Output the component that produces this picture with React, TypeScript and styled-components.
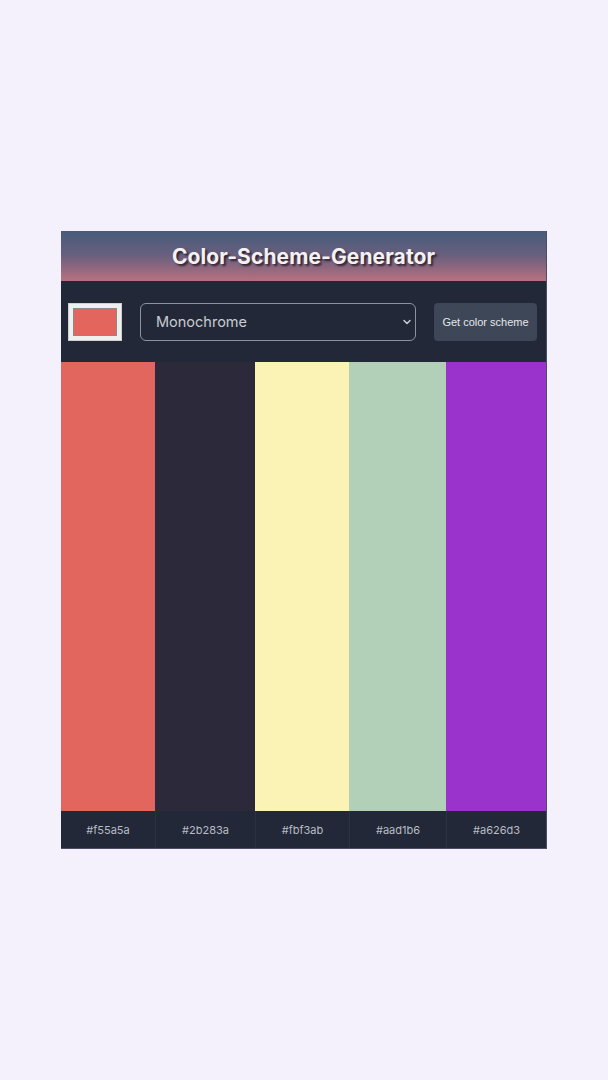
import React, { useState } from 'react';
import styled, { createGlobalStyle } from 'styled-components';

type Swatch = {
  hex: string;
  shown: string;
  width: number;
};

const swatches: Swatch[] = [
  { hex: '#f55a5a', shown: '#e3665e', width: 94 },
  { hex: '#2b283a', shown: '#2c2a3a', width: 100 },
  { hex: '#fbf3ab', shown: '#fbf3b5', width: 94 },
  { hex: '#aad1b6', shown: '#b2d0b8', width: 97 },
  { hex: '#a626d3', shown: '#9a32cc', width: 100 },
];

const GlobalStyle = createGlobalStyle`
  * { box-sizing: border-box; }
  html, body {
    margin: 0;
    padding: 0;
    background: #f4f1fc;
    font-family: Inter, "Noto Sans", sans-serif;
  }
`;

const App = () => {
  const [mode, setMode] = useState('monochrome');

  return (
    <>
      <GlobalStyle />
      <Page>
        <Card>
          <Header>
            <Title>Color-Scheme-Generator</Title>
          </Header>
          <Controls>
            <ColorPick>
              <ColorFill />
            </ColorPick>
            <SelectWrap>
              <Select value={mode} onChange={(e) => setMode(e.target.value)}>
                <option value="monochrome">Monochrome</option>
                <option value="monochrome-dark">Monochrome-dark</option>
                <option value="analogic">Analogic</option>
                <option value="complement">Complement</option>
              </Select>
              <Chevron width="10" height="10" viewBox="0 0 10 10">
                <path d="M2 3.5 L5 6.5 L8 3.5" fill="none" stroke="#c9ccd2" strokeWidth="1.5" strokeLinecap="round" strokeLinejoin="round" />
              </Chevron>
            </SelectWrap>
            <Button>Get color scheme</Button>
          </Controls>
          <Columns>
            {swatches.map((s, i) => (
              <Column key={s.hex} width={s.width}>
                <Block color={s.shown} />
                <Label divider={i > 0}>{s.hex}</Label>
              </Column>
            ))}
          </Columns>
        </Card>
      </Page>
    </>
  );
};

const Page = styled.div`
  min-height: 1080px;
  display: flex;
  justify-content: center;
  padding-top: 231px;
`;

const Card = styled.div`
  width: 486px;
  height: 618px;
  display: flex;
  flex-direction: column;
  background: #222838;
  border-right: 1px solid #4a4f63;
  border-bottom: 1px solid #4a4f63;
`;

const Header = styled.div`
  height: 50px;
  display: flex;
  align-items: center;
  justify-content: center;
  background: linear-gradient(to bottom, #465b7b 0%, #6a5f7e 50%, #b8717f 100%);
`;

const Title = styled.h1`
  margin: 0;
  font-size: 21px;
  font-weight: 700;
  color: #f4f1f1;
  text-shadow: 2px 2px 2px rgba(30, 20, 30, 0.8);
  letter-spacing: 0.1px;
`;

const Controls = styled.div`
  height: 81px;
  display: flex;
  align-items: center;
  padding: 0 9px 0 7px;
`;

const ColorPick = styled.div`
  width: 54px;
  height: 38px;
  background: #efefef;
  border: 1px solid #d0d0d0;
  padding: 4px 4px;
  flex-shrink: 0;
`;

const ColorFill = styled.div`
  width: 100%;
  height: 100%;
  background: #e3665e;
  border: 1px solid #8a8a8a;
`;

const SelectWrap = styled.div`
  position: relative;
  margin-left: 18px;
  width: 276px;
  height: 38px;
`;

const Select = styled.select`
  appearance: none;
  width: 100%;
  height: 100%;
  background: #222838;
  border: 1px solid #8e929c;
  border-radius: 6px;
  color: #c9ccd2;
  font-family: Inter, "Noto Sans", sans-serif;
  font-size: 14.5px;
  padding: 0 0 0 15px;
  outline: none;
`;

const Chevron = styled.svg`
  position: absolute;
  right: 4px;
  top: 14px;
  pointer-events: none;
`;

const Button = styled.button`
  margin-left: auto;
  width: 103px;
  height: 38px;
  border: none;
  border-radius: 4px;
  background: #3d4758;
  color: #e6e7ea;
  font-family: "Liberation Sans", Arial, sans-serif;
  font-size: 11px;
  padding: 0;
`;

const Columns = styled.div`
  flex: 1;
  display: flex;
`;

const Column = styled.div<{ width: number }>`
  width: ${(p) => p.width}px;
  display: flex;
  flex-direction: column;
`;

const Block = styled.div<{ color: string }>`
  flex: 1;
  background: ${(p) => p.color};
`;

const Label = styled.div<{ divider: boolean }>`
  height: 37px;
  display: flex;
  align-items: center;
  justify-content: center;
  color: #b9bcc4;
  font-size: 11px;
  background: #222838;
  border-left: ${(p) => (p.divider ? '1px solid #2b3242' : 'none')};
`;

export default App;
